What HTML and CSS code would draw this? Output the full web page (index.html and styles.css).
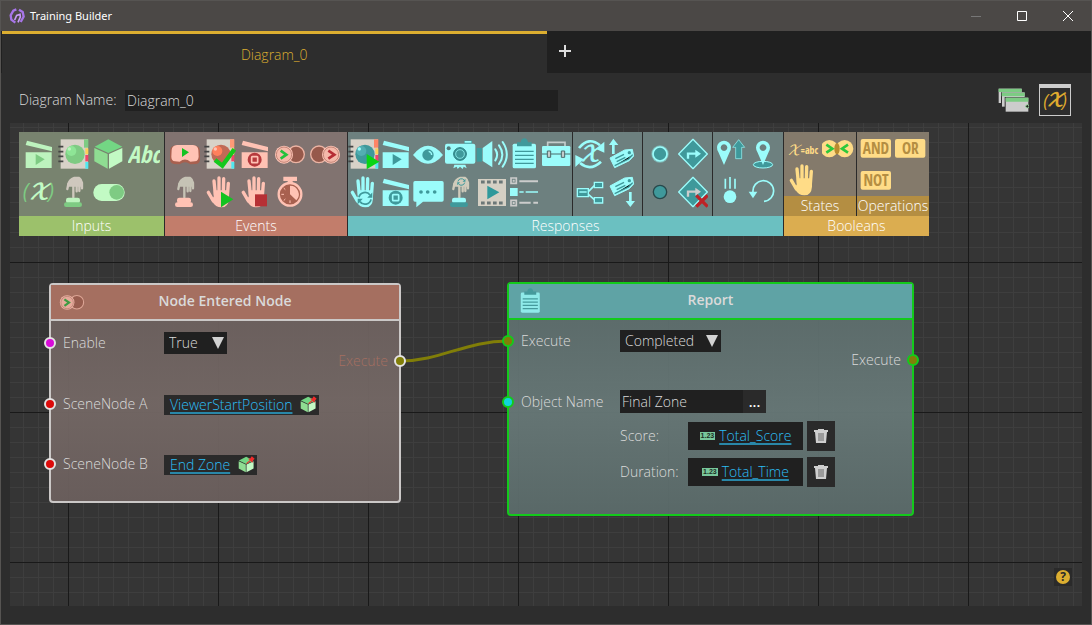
FILE: index.html
```html
<!DOCTYPE html>
<html lang="en">
<head>
<meta charset="utf-8">
<title>Training Builder</title>
<link rel="stylesheet" href="styles.css">
</head>
<body>
<svg class="defs" aria-hidden="true">
  <symbol id="clap" viewBox="0 0 96 96"><path fill="var(--a)" d="M12 8 87 27V40L8 21ZM8 43H86V90H8Z"/></symbol>
  <symbol id="clap-play" viewBox="0 0 96 96"><use href="#clap"/><path fill="var(--b)" d="M38 48 65 64 38 81Z"/></symbol>
  <symbol id="clap-stop" viewBox="0 0 96 96"><use href="#clap"/><circle cx="47" cy="65" r="21" fill="var(--s)"/><rect x="38" y="56" width="18" height="18" rx="2" fill="var(--s)" stroke="var(--a)" stroke-width="5"/></symbol>
  <symbol id="book" viewBox="0 0 96 96">
    <rect x="8" y="4" width="82" height="88" fill="#d8d2c8"/>
    <path stroke="#444" stroke-width="5" d="M1 26H16M1 41H16M1 55H16M1 70H16"/>
    <path fill="var(--t)" d="M78 4H91V29H78Z"/><path fill="#ffcf56" d="M82 31H91V49H82Z"/><path fill="#f0466a" d="M82 51H91V70H82Z"/><path fill="#50e8f0" d="M82 72H91V92H82Z"/>
    <circle cx="51" cy="49" r="29" fill="var(--b)"/><circle cx="40" cy="39" r="15" fill="var(--a2)"/><circle cx="34" cy="33" r="5" fill="var(--a)"/>
  </symbol>
  <symbol id="press" viewBox="0 0 96 96">
    <path fill="var(--h)" d="M27 26Q30 8 48 2H64Q74 7 75 26V32H27Z"/>
    <path fill="none" stroke="var(--h)" stroke-width="7" stroke-linecap="round" d="M46 20V64M31 24 28 39M56 20V46M64 20V45M72 20V37"/>
    <rect x="24" y="65" width="42" height="17" rx="7" fill="var(--a)"/><rect x="18" y="79" width="54" height="14" rx="7" fill="var(--p)"/>
  </symbol>
  <symbol id="hand" viewBox="0 0 96 96">
    <path fill="none" stroke="var(--a)" stroke-width="10" stroke-linecap="round" d="M34 55 30 15M45 50V6M58 50 59 8M70 60 73 22M13 49 28 75"/>
    <path fill="var(--a)" d="M29 43H75V68Q73 94 52 94 34 94 26 78L20 68 29 63Z"/>
  </symbol>
  <symbol id="rings" viewBox="0 0 96 96">
    <circle cx="66" cy="49" r="25" fill="#96594b" stroke="#ecb4a4" stroke-width="4"/><circle cx="30" cy="50" r="27" fill="#ffc6b8"/><circle cx="30" cy="50" r="23" fill="#f5b9aa" stroke="#a86a5b" stroke-width="2"/>
  </symbol>
  <symbol id="board" viewBox="0 0 96 96">
    <rect x="14" y="17" width="70" height="74" rx="5" fill="var(--a)"/><path fill="var(--b)" d="M27 13H38Q40 1 49 1T60 13H71V25H27Z"/>
    <path stroke="var(--b)" stroke-width="4" d="M21 40H77M21 52H77M21 64H77M21 76H77"/>
  </symbol>
  <symbol id="tag" viewBox="0 0 96 96">
    <path fill="var(--a)" stroke="var(--a)" stroke-width="3" stroke-linejoin="round" d="M12 60 56 36 79 34 83 54 70 68 26 89Z"/><path stroke="var(--b)" stroke-width="4" d="m26 83 42-20 12-13M28 62l26-13M32 71l26-13"/><circle cx="70" cy="44" r="5" fill="var(--b)"/>
  </symbol>
  <symbol id="turn" viewBox="0 0 96 96">
    <path fill="var(--b)" stroke="var(--a)" stroke-width="4" stroke-linejoin="round" d="M51 4 94 48 51 92 8 48Z"/>
    <path fill="none" stroke="var(--w)" stroke-width="7" d="M36 62V47H60"/><path fill="var(--w)" d="M58 35 75 47 58 59Z"/>
  </symbol>
  <symbol id="pin" viewBox="0 0 96 96"><path fill="var(--a)" fill-rule="evenodd" d="M30 81 13 42Q4 26 15 14 30 2 45 14 56 26 47 42ZM30 19a10 10 0 1 0 .1 0Z"/></symbol>
  <symbol id="cube" viewBox="0 0 96 96">
    <path fill="#73d684" d="M46 4 88 26 46 45 5 26Z"/><path fill="#8fdd92" d="M4 30 44 48V92L4 70Z"/><path fill="#c2fac4" d="M48 48 88 30V70L48 92Z"/>
  </symbol>
  <symbol id="pinned-cube" viewBox="0 0 96 96">
    <use href="#cube"/><path stroke="#f22b2b" stroke-width="6" fill="none" d="M48 43 70 25"/><path fill="#f22b2b" d="M56 14 68 15 78 2 94 16 82 28 82 40Z"/>
  </symbol>
  <symbol id="swirl" viewBox="0 0 96 96">
    <path fill="none" stroke="var(--c)" stroke-width="10" d="M13 42A36 36 0 0 1 77 29M83 54A36 36 0 0 1 19 67"/><path fill="var(--c)" d="M90 14V45H61ZM6 82V51H35Z"/>
  </symbol>
  <symbol id="bin" viewBox="0 0 16 16">
    <path fill="#cfcfcf" d="M1 2H5V1H11V2H15V4H1ZM2 4H14L13 15H3Z"/><path stroke="#666" stroke-width="1" d="M6 5V13M8 5V13M10 5V13"/>
  </symbol>
</svg>

<div class="window">
  <header class="titlebar">
    <svg class="logo" viewBox="0 0 48 48" aria-hidden="true"><path fill="none" stroke="#a775e8" stroke-width="7" d="M19 44 7 35 5 22 13 8 22 4M30 5 41 12 44 26 35 42"/><path fill="none" stroke="#c79af8" stroke-width="5" d="M17 36 23 22 33 19 34 27 27 43"/></svg>
    <h1>Training Builder</h1>
    <div class="winbtns">
      <button aria-label="Minimize" disabled><svg viewBox="0 0 12 12"><path d="M1 6.500H11" stroke="#777"/></svg></button>
      <button aria-label="Maximize"><svg viewBox="0 0 12 12"><path d="M1.500 1.500H10.500V10.500H1.500Z" stroke="#fff" fill="none"/></svg></button>
      <button aria-label="Close"><svg viewBox="0 0 12 12"><path d="M1 1 11 11M11 1 1 11" stroke="#fff"/></svg></button>
    </div>
  </header>

  <nav class="tabs">
    <button class="tab">Diagram_0</button>
    <button class="add" aria-label="Add diagram"><svg viewBox="0 0 14 14"><path d="M7 1V13M1 7H13" stroke="#ddd" stroke-width="2"/></svg></button>
  </nav>

  <div class="toolbar">
    <label for="dname">Diagram Name:</label>
    <input id="dname" type="text" value="Diagram_0">
    <div class="tools">
      <button aria-label="Diagrams"><svg viewBox="0 0 96 96"><path fill="#ccc" d="M5 14H74V57H5Z"/><path fill="#2d2d2d" d="M12 25H85V72H12Z"/><path fill="#ccc" d="M15 25H83V68H15Z"/><path fill="#2d2d2d" d="M23 39H96V82H23Z"/><path fill="#ccc" d="M26 41H94V83H26Z"/><path fill="#7ccb83" d="M5 14H74V24H5ZM14 26H83V37H14ZM26 41H94V53H26Z"/><circle cx="91" cy="67" r="5" fill="#222" stroke="#9bdca0" stroke-width="3"/></svg></button>
      <button class="vars" aria-label="Variables"><svg viewBox="0 0 96 96"><text class="paren" x="6" y="67" fill="#dda92f">(</text><text class="script" x="48" y="65" fill="#dda92f" text-anchor="middle">𝒳</text><text class="paren" x="72" y="67" fill="#dda92f">)</text></svg></button>
    </div>
  </div>

  <main class="canvas">
    <section class="palette" aria-label="Node palette">
      <div class="cat inputs">
        <div class="cells wide four">
          <button aria-label="Clip"><svg><use href="#clap-play"/></svg></button>
          <button aria-label="Scene"><svg><use href="#book"/></svg></button>
          <button aria-label="Object"><svg><use href="#cube"/></svg></button>
          <button aria-label="Text"><svg viewBox="0 0 96 96"><text class="abc" x="47" y="76" text-anchor="middle" fill="#c2fac4">Abc</text></svg></button>
          <button aria-label="Variable"><svg viewBox="0 0 96 96"><text class="paren" x="-1" y="69" fill="#7ecb83">(</text><text class="script" x="48" y="68" fill="#c2fac4" text-anchor="middle">𝒳</text><text class="paren" x="75" y="69" fill="#7ecb83">)</text></svg></button>
          <button aria-label="Press"><svg><use href="#press"/></svg></button>
          <button aria-label="Toggle"><svg viewBox="0 0 96 96"><rect x="1" y="24" width="94" height="51" rx="25" fill="#c2fac4"/><circle cx="71" cy="49" r="22" fill="#7ecb83"/></svg></button>
        </div>
        <h2>Inputs</h2>
      </div>
      <div class="cat events">
        <div class="cells wide five">
          <button aria-label="Headset"><svg viewBox="0 0 96 96"><path fill="#a8604f" d="M3 40Q3 24 20 22H74Q93 24 93 40V66Q91 78 80 78L64 79Q48 66 32 79L16 78Q3 76 3 64Z"/><path fill="#ffc2b4" d="M8 36Q9 22 24 21H72Q87 22 88 36L89 56Q88 68 78 70L64 71Q48 58 32 71L18 70Q7 68 7 56Z"/><path fill="#14c322" d="M39 30 60 43 39 57Z"/></svg></button>
          <button aria-label="Scene completed"><svg viewBox="0 0 96 96"><use href="#book"/><path fill="none" stroke="#14c81c" stroke-width="13" d="M33 66 55 83 91 34"/></svg></button>
          <button aria-label="Clip ended"><svg><use href="#clap-stop"/></svg></button>
          <button aria-label="Node entered"><svg viewBox="0 0 96 96"><use href="#rings"/><path fill="none" stroke="#24c23b" stroke-width="8" d="M20 38 37 50 20 62"/></svg></button>
          <button aria-label="Node exited"><svg viewBox="0 0 96 96"><use href="#rings" transform="matrix(-1 0 0 1 96 0)"/><path fill="none" stroke="#b62d35" stroke-width="8" d="M58 38 76 50 58 62"/></svg></button>
          <button aria-label="Pressed"><svg><use href="#press"/></svg></button>
          <button aria-label="Grab started"><svg viewBox="0 0 96 96"><use href="#hand"/><path fill="#14c322" d="M51 47 88 70 51 94Z"/></svg></button>
          <button aria-label="Grab ended"><svg viewBox="0 0 96 96"><use href="#hand"/><path fill="#b63035" d="M48 55H84V91H48Z"/></svg></button>
          <button aria-label="Timer"><svg viewBox="0 0 96 96"><path fill="#ffc2b4" d="M28 2H69V15H56V25H41V15H28Z"/><circle cx="48" cy="55" r="34" fill="#a8604f" stroke="#ffc2b4" stroke-width="7"/><path fill="#ffc2b4" d="M48 55V29A26 26 0 0 1 67 73Z"/><path stroke="#ffc2b4" stroke-width="3" d="M22 55H30M48 81V73M29 36l5 5M29 74l5-5"/></svg></button>
        </div>
        <h2>Events</h2>
      </div>
      <div class="cat responses">
        <div class="groups">
          <div class="cells seven">
            <button aria-label="Play scene"><svg viewBox="0 0 96 96"><use href="#book"/><path fill="#0ad414" d="M56 48 94 71 56 94Z"/></svg></button>
            <button aria-label="Play clip"><svg><use href="#clap-play"/></svg></button>
            <button aria-label="Visibility"><svg viewBox="0 0 96 96"><path fill="#9bfcfb" d="M3 51Q48-4 93 51 48 104 3 51Z"/><circle cx="48" cy="51" r="17" fill="#3f999b"/><path fill="none" stroke="#9bfcfb" stroke-width="4" d="M50 40Q59 42 59 51"/></svg></button>
            <button aria-label="Camera"><svg viewBox="0 0 96 96"><path fill="#3f999b" d="M61 8H84V18H61Z"/><rect x="3" y="17" width="91" height="60" rx="6" fill="#9bfcfb"/><path fill="#9bfcfb" d="M62 9H82V14H62ZM31 80H64L68 91 59 86 56 93 48 86 41 93 38 86 28 91Z"/><circle cx="48" cy="48" r="19" fill="#3f999b" stroke="#24777a" stroke-width="3"/><circle cx="48" cy="48" r="13" fill="none" stroke="#9bfcfb" stroke-width="2"/><circle cx="14" cy="31" r="6" fill="#527a7b"/></svg></button>
            <button aria-label="Sound"><svg viewBox="0 0 96 96"><path fill="#3f999b" d="M2 30H18V71H2Z"/><path fill="#9bfcfb" d="M20 30 49 9V88L20 69Z"/><path fill="none" stroke="#9bfcfb" stroke-width="6" stroke-linecap="round" d="M58 34Q69 50 58 67M69 22Q89 50 69 78M80 12Q105 50 80 86"/></svg></button>
            <button aria-label="Report"><svg><use href="#board"/></svg></button>
            <button aria-label="Toolbox"><svg viewBox="0 0 96 96"><path fill="none" stroke="#c4cccc" stroke-width="5" d="M23 25V13H75V25"/><rect x="6" y="24" width="85" height="60" rx="4" fill="#9bfcfb"/><path stroke="#4b6a6b" stroke-width="3" d="M6 48H91"/><path fill="#c4cccc" stroke="#4b6a6b" stroke-width="3" d="M22 39H32V58H22ZM64 39H74V58H64Z"/></svg></button>
            <button aria-label="Reset grab"><svg viewBox="0 0 96 96"><use href="#hand"/><use class="dk" href="#swirl" x="26" y="42" width="50" height="50"/></svg></button>
            <button aria-label="Stop clip"><svg><use href="#clap-stop"/></svg></button>
            <button aria-label="Message"><svg viewBox="0 0 96 96"><path fill="#9bfcfb" d="M9 15H90Q95 15 95 20V72Q95 77 90 77H33L13 94V77H9Q4 77 4 72V20Q4 15 9 15Z"/><path stroke="#3f999b" stroke-width="11" stroke-linecap="round" d="M27 48h.1M47 48h.1M68 48h.1"/></svg></button>
            <button aria-label="Reset press"><svg viewBox="0 0 96 96"><use href="#press"/><use class="dk" href="#swirl" x="38" y="4" width="28" height="28"/></svg></button>
            <button aria-label="Video"><svg viewBox="0 0 96 96"><path fill="#d5d0c4" d="M6 9H90V90H6Z"/><path stroke="#6b7777" stroke-width="9" stroke-dasharray="11 7" d="M15 18H85M15 81H85"/><path fill="#2f999b" d="M34 29 70 49 34 70Z"/></svg></button>
            <button aria-label="Task list"><svg viewBox="0 0 96 96"><path fill="none" stroke="#ccc" stroke-width="5" d="M9 6H25V22H9ZM9 73H25V89H9Z"/><path fill="#ccc" d="M14 11H20V17H14ZM14 78H20V84H14Z"/><path fill="#9bfcfb" d="M6 36H29V60H6Z"/><path stroke="#ccc" stroke-width="6" d="M34 16H90M34 80H68M76 80H90"/><path stroke="#9bfcfb" stroke-width="5" d="M34 48H47M53 48H90"/></svg></button>
          </div>
          <div class="cells two">
            <button aria-label="Set variable"><svg viewBox="0 0 96 96"><path fill="none" stroke="#9bfcfb" stroke-width="8" d="M15 30Q44-6 78 22M81 71Q49 101 18 75"/><path fill="#9bfcfb" d="M91 11V44L66 33ZM4 87V51L29 64Z"/><text class="script" x="48" y="69" fill="#9bfcfb" text-anchor="middle">𝒳</text></svg></button>
            <button aria-label="Attach"><svg viewBox="0 0 96 96"><use href="#tag"/><path fill="#9bfcfb" d="M22 2 37 21H26V48H18V21H9Z"/></svg></button>
            <button aria-label="Hierarchy"><svg viewBox="0 0 96 96"><path fill="#3f999b" stroke="#9bfcfb" stroke-width="4" d="M10 38H43V62H10ZM61 19H86V35H61ZM61 65H86V81H61Z"/><path fill="none" stroke="#9bfcfb" stroke-width="5" d="M43 47 61 29M43 55 61 71M16 48H38"/></svg></button>
            <button aria-label="Detach"><svg viewBox="0 0 96 96"><use href="#tag" y="-30"/><path fill="#9bfcfb" d="M73 93 59 75H69V48H77V75H87Z"/></svg></button>
          </div>
          <div class="cells two">
            <button aria-label="Highlight"><svg viewBox="0 0 96 96"><circle cx="48" cy="48" r="26" fill="#8fe9e8" opacity=".5"/><circle cx="48" cy="48" r="21" fill="#3f999b" stroke="#9bfcfb" stroke-width="5"/></svg></button>
            <button aria-label="Go to"><svg><use href="#turn"/></svg></button>
            <button aria-label="Remove highlight"><svg viewBox="0 0 96 96"><circle cx="48" cy="48" r="20" fill="#3f999b" stroke="#27484b" stroke-width="4"/></svg></button>
            <button class="grey" aria-label="Cancel go to"><svg viewBox="0 0 96 96"><use href="#turn"/><path stroke="#bd2226" stroke-width="10" d="M61 58 95 92M95 58 61 92"/></svg></button>
          </div>
          <div class="cells two last">
            <button aria-label="Move up"><svg viewBox="0 0 96 96"><use href="#pin"/><path fill="#3f999b" stroke="#9bfcfb" stroke-width="2" d="M74 5 92 28H83V62H65V28H56Z"/></svg></button>
            <button aria-label="Move to"><svg viewBox="0 0 96 96"><ellipse cx="51" cy="80" rx="29" ry="10" fill="#3f999b" stroke="#9bfcfb" stroke-width="3"/><use href="#pin" x="21"/></svg></button>
            <button aria-label="Drop"><svg viewBox="0 0 96 96"><circle cx="48" cy="62" r="19" fill="#9bfcfb"/><path stroke="#9bfcfb" stroke-width="5" d="M34 8V38M48 3V38M63 8V38"/></svg></button>
            <button aria-label="Reset"><svg viewBox="0 0 96 96"><path fill="none" stroke="#9bfcfb" stroke-width="5" d="M21 48A31 31 0 1 1 54 76"/><path fill="#9bfcfb" d="M8 47H34L21 67Z"/></svg></button>
          </div>
        </div>
        <h2>Responses</h2>
      </div>
      <div class="cat booleans">
        <div class="groups">
          <div class="sub">
            <div class="cells wide short">
              <button aria-label="Variable equals"><svg viewBox="0 0 96 96"><text class="eqx" x="0" y="70" fill="#ffdc87">𝒳<tspan class="eq" dy="-4">=abc</tspan></text></svg></button>
              <button aria-label="Nodes touching"><svg viewBox="0 0 96 96"><circle cx="22" cy="50" r="26" fill="#ffdc87"/><circle cx="68" cy="50" r="26" fill="#ffdc87"/><ellipse cx="45" cy="50" rx="8" ry="17" fill="#b98b2e"/><path fill="none" stroke="#2cc83c" stroke-width="8" d="M13 38 31 50 13 62M78 38 60 50 78 62"/></svg></button>
              <button aria-label="Grabbed"><svg><use href="#hand"/></svg></button>
            </div>
            <h3>States</h3>
          </div>
          <div class="sub">
            <div class="cells wide short">
              <button aria-label="And"><svg viewBox="0 0 96 96"><rect x="2" y="21" width="91" height="56" rx="6" fill="#ffdc87"/><text class="op" x="48" y="65" text-anchor="middle">AND</text></svg></button>
              <button aria-label="Or"><svg viewBox="0 0 96 96"><rect x="0" y="21" width="91" height="56" rx="6" fill="#ffdc87"/><text class="op" x="46" y="65" text-anchor="middle">OR</text></svg></button>
              <button aria-label="Not"><svg viewBox="0 0 96 96"><rect x="2" y="21" width="91" height="56" rx="6" fill="#ffdc87"/><text class="op" x="48" y="65" text-anchor="middle">NOT</text></svg></button>
            </div>
            <h3>Operations</h3>
          </div>
        </div>
        <h2>Booleans</h2>
      </div>
    </section>

    <svg class="wires" aria-hidden="true"><path d="M390 238C430 238 456 218 498 218"/></svg>

    <article class="node entered">
      <header><svg viewBox="0 0 96 96"><use href="#rings"/><path fill="none" stroke="#24a63b" stroke-width="8" d="M20 38 37 50 20 62"/></svg><h2>Node Entered Node</h2></header>
      <div class="body">
        <div class="fields">
          <label class="name" for="enable"><i class="port magenta"></i>Enable</label>
          <div><span class="pick short-pick"><select id="enable"><option>True</option></select></span></div>
          <span class="name"><i class="port red"></i>SceneNode A</span>
          <div><span class="ref"><a href="#">ViewerStartPosition</a><svg><use href="#pinned-cube"/></svg></span></div>
          <span class="name"><i class="port red"></i>SceneNode B</span>
          <div><span class="ref"><a href="#">End Zone</a><svg><use href="#pinned-cube"/></svg></span></div>
        </div>
        <div class="out">Execute<i class="port olive"></i></div>
      </div>
    </article>

    <article class="node report">
      <header><svg><use href="#board"/></svg><h2>Report</h2></header>
      <div class="body">
        <div class="fields">
          <label class="name lead" for="exec"><i class="port olive"></i>Execute</label>
          <div class="lead"><span class="pick"><select id="exec"><option>Completed</option></select></span></div>
          <label class="name" for="oname"><i class="port cyan"></i>Object Name</label>
          <div class="browse"><input id="oname" type="text" value="Final Zone"><button aria-label="Browse">...</button></div>
          <div class="vals">
            <span>Score:</span><span class="val"><b>1.23</b><a href="#">Total_Score</a></span><button aria-label="Delete score"><svg><use href="#bin"/></svg></button>
            <span>Duration:</span><span class="val"><b>1.23</b><a href="#">Total_Time</a></span><button aria-label="Delete duration"><svg><use href="#bin"/></svg></button>
          </div>
        </div>
        <div class="out">Execute<i class="port olive"></i></div>
      </div>
    </article>

    <button class="help" aria-label="Help"><span>?</span></button>
  </main>
</div>
</body>
</html>
```

FILE: styles.css
```css
* { box-sizing: border-box; }
body {
  margin: 0;
  background: #2d2d2d;
  color: #dadada;
  font: 300 14px/20px "Open Sans", "Noto Sans", sans-serif;
}
button, input, select { font: inherit; color: inherit; border: 0; margin: 0; padding: 0; background: none; border-radius: 0; }
h1, h2, h3 { margin: 0; font-size: inherit; font-weight: inherit; }
svg { display: block; }
.defs { position: absolute; width: 0; height: 0; }

.window { display: flex; flex-direction: column; min-height: 100vh; border: 1px solid #565452; }

/* Title bar */
.titlebar { display: flex; align-items: center; height: 30px; padding-left: 8px; background: #4b4846; color: #fff; }
.logo { width: 16px; height: 16px; margin-right: 5px; }
.titlebar h1 { flex: 1; font: 400 11px/16px "Noto Sans", sans-serif; }
.winbtns { display: flex; }
.winbtns button { display: grid; place-items: center; width: 46px; height: 28px; }
.winbtns svg { width: 12px; height: 12px; }

/* Tabs */
.tabs { display: grid; grid-template-columns: 1fr 1fr; height: 42px; padding-left: 1px; background: #202020; }
.tab { padding-top: 2px; border-top: 3px solid #dcae30; background: #2d2d2d; color: #dcae30; }
.add { width: 36px; height: 40px; display: grid; place-items: center; }
.add svg { width: 14px; height: 14px; }

/* Diagram toolbar */
.toolbar { display: flex; align-items: center; height: 50px; padding: 4px 20px 0 18px; }
.toolbar label { flex: none; width: 106px; }
.toolbar input { flex: 0 1 433px; height: 21px; padding: 0 2px; background: #202020; }
.tools { display: flex; gap: 10px; margin-left: auto; }
.tools svg { width: 32px; height: 32px; }
.vars { border: 1px solid #ccc; border-top-width: 4px; }
.vars svg { width: 30px; height: 27px; }

/* Canvas with 15px minor and 150px major grid */
.canvas {
  position: relative;
  flex: 1;
  min-height: 460px;
  margin: 0 9px 18px;
  padding: 9px;
  background-color: #353535;
  background-image:
    linear-gradient(90deg, #191919 1px, transparent 1px),
    linear-gradient(#191919 1px, transparent 1px),
    linear-gradient(90deg, #3e3e3e 1px, transparent 1px),
    linear-gradient(#3e3e3e 1px, transparent 1px);
  background-size: 150px 150px, 150px 150px, 15px 15px, 15px 15px;
  background-position: 58px 0, 0 139px, 13px 0, 0 4px;
}

/* Palette */
.palette { display: flex; gap: 1px; width: max-content; color: #fff; text-align: center; background: #2a2a2a; }
.cat { display: flex; flex-direction: column; }
.cat h2, .cat h3 { height: 20px; line-height: 20px; }
.groups { display: flex; gap: 1px; flex: 1; }
.cells {
  display: grid;
  grid-template-columns: repeat(2, 32px);
  grid-auto-rows: 38px;
  align-content: start;
  height: 84px;
  padding: 3px 4px 0 1px;
  background: var(--bg);
}
.cells button { display: grid; place-items: center; }
.cells svg { width: 32px; height: 32px; }
.cells.wide { grid-template-columns: repeat(2, 35px); padding: 3px 1px 0 1px; }
.cells.four { grid-template-columns: repeat(4, 35px); padding: 3px 3px 0 2px; }
.cells.five { grid-template-columns: repeat(5, 35px); padding: 3px 5px 0 2px; }
.cells.seven { grid-template-columns: repeat(7, 32px); padding: 3px 0 0; }
.cells.last { padding-right: 5px; }
.cells.short { grid-auto-rows: 32px; height: 64px; padding-top: 0; }
.inputs { --a: #bdf3be; --b: #7ecb83; --a2: #8ee596; --t: #7ecb83; --h: #cfc8be; --p: #7ecb83; --bg: #78836f; }
.inputs h2 { background: #9cc16b; }
.events { --a: #ffc2b4; --b: #c06a56; --a2: #ff805c; --t: #ff9a76; --h: #c6c3b5; --p: #ffc2b4; --s: #b63a3d; --bg: #817370; }
.events h2 { background: #c27d6b; }
.responses, .report { --a: #9bfcfb; --b: #3f999b; --a2: #52aeb2; --t: #ff8566; --h: #d0cbbb; --p: #3f999b; --s: #3f999b; --w: #9bfcfb; --bg: #6d807f; }
.responses h2 { background: #6bc0c1; }
.booleans { --a: #ffdc87; --bg: #847a6b; }
.booleans h2 { background: #dbad50; }
.booleans h3 { background: #b48e42; }
.grey { --w: #ccc; }
.dk { --c: #3f999b; }

.script { font: italic 700 64px "DejaVu Math TeX Gyre", "Liberation Serif", serif; }
.paren { font: italic 400 64px "Open Sans", sans-serif; }
.abc { font: italic 700 70px "Liberation Sans Narrow", "Open Sans Condensed", "DejaVu Sans Condensed", sans-serif; }
.eqx { font: italic 400 42px "DejaVu Math TeX Gyre", "Liberation Serif", serif; }
.eq { font: 700 30px "Liberation Sans Narrow", "Open Sans Condensed", "Liberation Sans", sans-serif; }
.op { font: 700 46px "Liberation Sans Narrow", "Open Sans Condensed", "Liberation Sans", sans-serif; fill: #b48e42; }

/* Wires and nodes */
.wires { position: absolute; inset: 0; width: 100%; height: 100%; pointer-events: none; }
.wires path { fill: none; stroke: #817e08; stroke-width: 3; }
.node { position: absolute; border: 2px solid var(--line); border-radius: 4px; background: linear-gradient(var(--edge), var(--mid) 55%, var(--edge)); }
.entered { left: 39px; top: 160px; width: 352px; height: 220px; --line: #cbc8c7; --edge: #6b5f5df2; --mid: #746865f2; --head: #a56f60; }
.report { left: 497px; top: 159px; width: 407px; height: 234px; --line: #13ca1b; --edge: #5b6b6af2; --mid: #677877f2; --head: #5fa3a5; }
.node header { display: grid; grid-template-columns: 26px 1fr 26px; align-items: center; height: 36px; padding: 0 10px 0 8px; background: var(--head); border-bottom: 2px solid var(--line); }
.node header svg { width: 26px; height: 26px; opacity: .8; }
.node header h2 { padding: 0 0 3px 2px; font-weight: 600; text-align: center; }
.body { display: flex; justify-content: space-between; }
.fields { display: grid; grid-template-columns: 101px auto; align-items: center; padding-left: 12px; }
.entered .fields { grid-template-rows: 43px 80px 40px; }
.name { position: relative; white-space: nowrap; }
.out { position: relative; padding: 30px 11px 0 0; height: 50px; }
.entered .out { color: #a56f60; }
.port { position: absolute; left: -19px; top: 4px; width: 12px; height: 12px; border: 2px solid #e4e2e2; border-radius: 50%; }
.report .port { border-color: #13ca1b; }
.out .port { left: auto; right: -7px; top: 34px; }
.magenta { background: #d80bd8; }
.red { background: #dc0a0a; }
.olive { background: #817e08; }
.report .cyan { background: #10d4dc; }

.pick { position: relative; display: inline-block; width: 101px; height: 22px; background: #202020; vertical-align: middle; }
.short-pick { width: 63px; }
.pick::after { content: ""; position: absolute; right: 3px; top: 5px; border: 6px solid transparent; border-top: 12px solid #d2d2d2; border-bottom: 0; pointer-events: none; }
.pick select { width: 100%; height: 22px; padding-left: 5px; appearance: none; }
.ref { display: inline-flex; align-items: center; gap: 8px; height: 20px; padding: 0 2px 0 6px; background: #2a2a2a; vertical-align: middle; }
.ref svg { width: 17px; height: 17px; }
a { color: #2dbff5; text-decoration: underline 2px #2987a8; text-underline-offset: 2px; }

.report .fields { grid-template-columns: 99px auto; grid-template-rows: 62px 39px auto; }
.lead { margin-bottom: 20px; }
.browse { display: flex; width: 146px; height: 23px; background: #202020; }
.browse input { flex: 1; min-width: 0; padding-left: 2px; }
.browse button { width: 23px; background: #2a2a2a; color: #fff; font-weight: 600; }
.vals { grid-column: 2; display: grid; grid-template-columns: 64px 115px 28px; gap: 6px 4px; align-items: center; }
.val { display: flex; align-items: center; justify-content: center; gap: 4px; height: 28px; background: #202020; }
.val b { height: 8px; padding: 0 1px; background: #78c79b; color: #1c3024; font: 700 7px/8px "Liberation Sans", sans-serif; }
.vals button { display: grid; place-items: center; height: 30px; background: #2a2a2a; }
.vals button svg { width: 16px; height: 16px; }

.help { position: absolute; right: 10px; bottom: 20px; display: grid; place-items: center; width: 18px; height: 18px; background: #2a2a2a; }
.help span { width: 14px; height: 14px; border-radius: 50%; background: #dcae30; color: #2a2a2a; font: 700 12px/14px "Open Sans", sans-serif; }
```
